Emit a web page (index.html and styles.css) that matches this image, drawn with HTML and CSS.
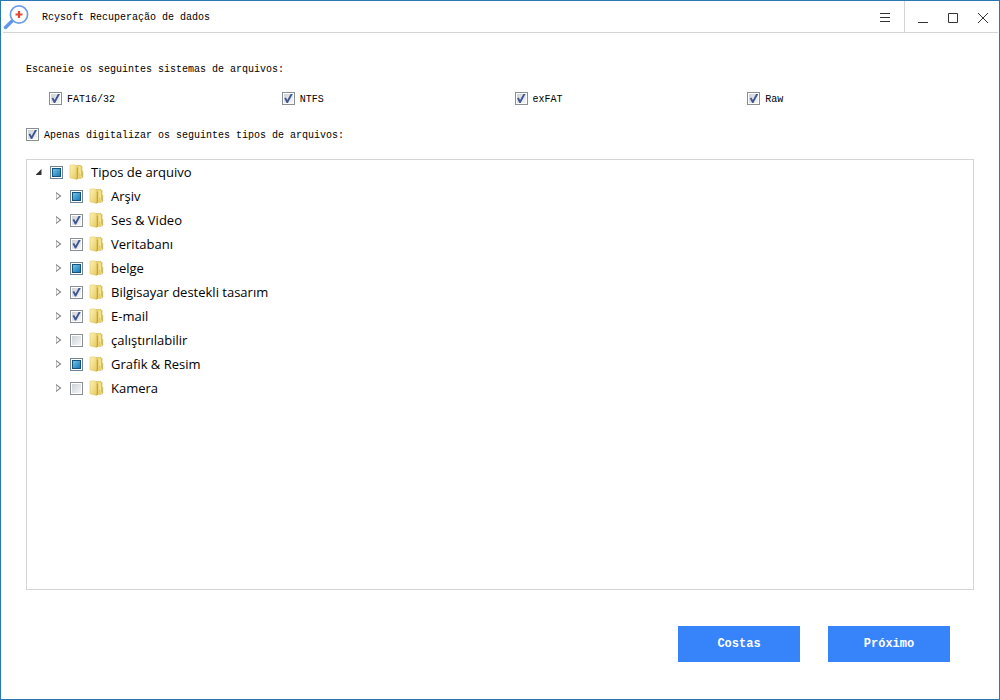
FILE: index.html
```
<!DOCTYPE html>
<html lang="pt">

<head>
    <meta charset="UTF-8">
    <meta name="viewport" content="width=device-width, initial-scale=1.0">
    <title>Rcysoft Recuperação de dados</title>
    <link rel="stylesheet" href="styles.css">
</head>

<body>
    <svg class="sprite" aria-hidden="true">
        <defs>
            <linearGradient id="folderBack" x1="0" y1="0" x2="1" y2="0">
                <stop offset="0" stop-color="#f6e68c" />
                <stop offset="1" stop-color="#d9b947" />
            </linearGradient>
            <linearGradient id="folderFront" x1="0" y1="0" x2="1" y2="1">
                <stop offset="0" stop-color="#fdf5b4" />
                <stop offset="1" stop-color="#e3c75c" />
            </linearGradient>
            <symbol id="folder" viewBox="0 0 16 16">
                <path d="M7 1.5h5l1 1v4l.8.8v6l-1.3 1H7z" fill="url(#folderBack)" stroke="#d2b552" stroke-width=".6" />
                <path d="M11 2.500v6.500l1.200.8v4" fill="none" stroke="#fff3b0" stroke-width="1" />
                <path d="M12.900 9v3.500" stroke="#9fb27c" stroke-width="1" />
                <path d="M1 1.200 5.500.8l2.500 2v12.700L1 13.800z" fill="url(#folderFront)" stroke="#dfc566" stroke-width=".6" />
                <path d="M8.300 3.500v11.500" stroke="#c09c35" stroke-width="1" />
            </symbol>
        </defs>
    </svg>

    <header class="titlebar">
        <svg class="logo" width="26" height="26" viewBox="0 0 26 26" aria-hidden="true">
            <path d="M2.500 23.500 9 17" stroke="#5f97ea" stroke-width="3.400" stroke-linecap="round" />
            <path d="M8.500 17.500l2.500-2.500" stroke="#5f97ea" stroke-width="1.600" />
            <circle cx="16" cy="10.500" r="8.600" fill="#fff" stroke="#6d9fea" stroke-width="1.700" />
            <path d="M16 7v7M12.500 10.500h7" stroke="#e2492f" stroke-width="2.200" />
        </svg>
        <h1>Rcysoft Recuperação de dados</h1>
        <button type="button" class="window-button menu-button" aria-label="Menu">
            <svg width="12" height="12" viewBox="0 0 12 12"><path d="M1 2.500h10M1 6.500h10M1 10.500h10" /></svg>
        </button>
        <div class="window-controls">
            <button type="button" class="window-button" aria-label="Minimizar">
                <svg width="12" height="12" viewBox="0 0 12 12"><path d="M1 11.500h10" /></svg>
            </button>
            <button type="button" class="window-button" aria-label="Maximizar">
                <svg width="12" height="12" viewBox="0 0 12 12"><path d="M1.500 2.500h9v9h-9z" /></svg>
            </button>
            <button type="button" class="window-button" aria-label="Fechar">
                <svg width="12" height="12" viewBox="0 0 12 12"><path d="M1 2l10 10M11 2L1 12" /></svg>
            </button>
        </div>
    </header>

    <main class="content">
        <fieldset class="systems">
            <legend>Escaneie os seguintes sistemas de arquivos:</legend>
            <div class="system-list">
                <label class="option"><input type="checkbox" checked>FAT16/32</label>
                <label class="option"><input type="checkbox" checked>NTFS</label>
                <label class="option"><input type="checkbox" checked>exFAT</label>
                <label class="option"><input type="checkbox" checked>Raw</label>
            </div>
        </fieldset>

        <label class="option"><input type="checkbox" checked>Apenas digitalizar os seguintes tipos de arquivos:</label>

        <div class="tree">
            <div class="tree-row">
                <button type="button" class="toggle open" aria-label="Recolher" aria-expanded="true"></button>
                <label class="node"><input type="checkbox" class="partial"><svg class="folder"><use href="#folder" /></svg>Tipos de arquivo</label>
            </div>
            <ul>
                <li class="tree-row">
                    <button type="button" class="toggle" aria-label="Expandir"></button>
                    <label class="node"><input type="checkbox" class="partial"><svg class="folder"><use href="#folder" /></svg>Arşiv</label>
                </li>
                <li class="tree-row">
                    <button type="button" class="toggle" aria-label="Expandir"></button>
                    <label class="node"><input type="checkbox" checked><svg class="folder"><use href="#folder" /></svg>Ses &amp; Video</label>
                </li>
                <li class="tree-row">
                    <button type="button" class="toggle" aria-label="Expandir"></button>
                    <label class="node"><input type="checkbox" checked><svg class="folder"><use href="#folder" /></svg>Veritabanı</label>
                </li>
                <li class="tree-row">
                    <button type="button" class="toggle" aria-label="Expandir"></button>
                    <label class="node"><input type="checkbox" class="partial"><svg class="folder"><use href="#folder" /></svg>belge</label>
                </li>
                <li class="tree-row">
                    <button type="button" class="toggle" aria-label="Expandir"></button>
                    <label class="node"><input type="checkbox" checked><svg class="folder"><use href="#folder" /></svg>Bilgisayar destekli tasarım</label>
                </li>
                <li class="tree-row">
                    <button type="button" class="toggle" aria-label="Expandir"></button>
                    <label class="node"><input type="checkbox" checked><svg class="folder"><use href="#folder" /></svg>E-mail</label>
                </li>
                <li class="tree-row">
                    <button type="button" class="toggle" aria-label="Expandir"></button>
                    <label class="node"><input type="checkbox"><svg class="folder"><use href="#folder" /></svg>çalıştırılabilir</label>
                </li>
                <li class="tree-row">
                    <button type="button" class="toggle" aria-label="Expandir"></button>
                    <label class="node"><input type="checkbox" class="partial"><svg class="folder"><use href="#folder" /></svg>Grafik &amp; Resim</label>
                </li>
                <li class="tree-row">
                    <button type="button" class="toggle" aria-label="Expandir"></button>
                    <label class="node"><input type="checkbox"><svg class="folder"><use href="#folder" /></svg>Kamera</label>
                </li>
            </ul>
        </div>
    </main>

    <footer class="actions">
        <button type="button" class="action">Costas</button>
        <button type="button" class="action">Próximo</button>
    </footer>

    <script>
        // The mixed state can only be set from script
        document.querySelectorAll('.partial').forEach((box) => {
            box.indeterminate = true;
        });

        // Fold and unfold the root node
        const root = document.querySelector('.toggle.open');
        const list = document.querySelector('.tree ul');
        root.addEventListener('click', () => {
            const open = root.classList.toggle('open');
            root.setAttribute('aria-expanded', open);
            list.hidden = !open;
        });
    </script>
</body>

</html>
```
FILE: styles.css
```
*,
*::before {
    box-sizing: border-box;
    margin: 0;
    padding: 0;
}

body {
    min-height: 100vh;
    display: flex;
    flex-direction: column;
    border: 1px solid #2878b4;
    background-color: #fff;
    color: #000;
    font-family: "Liberation Mono", monospace;
    font-size: 10px;
    line-height: 16px;
}

button {
    border: none;
    background: none;
    cursor: pointer;
}

.sprite {
    position: absolute;
    width: 0;
    height: 0;
}

/* Title bar */
.titlebar {
    display: flex;
    align-items: center;
    height: 32px;
    margin: 0 1px 0 2px;
    border-bottom: 1px solid #d5d5d5;
}

.logo {
    margin-right: 13px;
}

h1 {
    flex: 1;
    padding-top: 2px;
    font-size: 10px;
    font-weight: normal;
}

.window-button {
    display: flex;
    align-items: center;
    justify-content: center;
    width: 30px;
    height: 31px;
}

.window-button:hover {
    background-color: #eee;
}

.window-button svg {
    fill: none;
    stroke: #333;
    stroke-width: 1;
}

.menu-button {
    width: 38px;
}

.window-controls {
    display: flex;
    padding-left: 3px;
    border-left: 1px solid #d5d5d5;
}

/* Scan options */
.content {
    flex: 1;
    display: flex;
    flex-direction: column;
    padding: 29px 25px 0;
}

.systems {
    border: none;
    margin-bottom: 20px;
}

.system-list {
    display: grid;
    grid-template-columns: repeat(4, 1fr);
    gap: 8px;
    padding: 14px 2px 0 23px;
}

.option {
    display: flex;
    align-items: flex-start;
    gap: 5px;
}

input[type="checkbox"] {
    appearance: none;
    display: grid;
    place-items: center;
    width: 13px;
    height: 13px;
    border: 1px solid #8a8f94;
    background: linear-gradient(135deg, #cdd2da, #f6f6f6) content-box #f4f4f4;
    padding: 1px;
}

input[type="checkbox"]:checked::before {
    content: "";
    width: 9px;
    height: 9px;
    background-color: #41568f;
    clip-path: polygon(6% 48%, 24% 40%, 40% 66%, 76% 0, 100% 0, 46% 100%, 32% 100%);
}

input[type="checkbox"]:indeterminate {
    border-color: #6f8597;
    background: #fff;
}

input[type="checkbox"]:indeterminate::before {
    content: "";
    width: 9px;
    height: 9px;
    border: 1px solid #17527d;
    background: linear-gradient(135deg, #6cc4ea, #1c78b4);
}

/* File type tree */
.tree {
    flex: 1;
    margin-top: 15px;
    padding-left: 3px;
    border: 1px solid #d5d5d5;
    font-family: "Open Sans", sans-serif;
    font-size: 13px;
}

.tree ul {
    list-style: none;
    padding-left: 20px;
}

.tree-row,
.node {
    display: flex;
    align-items: center;
    height: 24px;
}

.folder {
    width: 16px;
    height: 16px;
    margin: 0 6px;
}

.toggle {
    width: 17px;
    height: 16px;
    margin-right: 3px;
    display: grid;
    place-items: center;
}

.toggle::before {
    content: "";
    width: 6px;
    height: 9px;
    background-color: #8a8a8a;
    clip-path: polygon(0 0, 100% 50%, 0 100%, 0 0, 1px 2px, 1px 7px, 4px 50%, 1px 2px);
}

.toggle.open::before {
    width: 6px;
    height: 6px;
    background-color: #333;
    clip-path: polygon(100% 0, 100% 100%, 0 100%);
}

/* Bottom buttons */
.actions {
    display: flex;
    justify-content: flex-end;
    gap: 28px;
    padding: 36px 49px 37px;
}

.action {
    width: 122px;
    height: 36px;
    background-color: #3783fa;
    color: #fff;
    font-family: "Liberation Mono", monospace;
    font-size: 12px;
    font-weight: bold;
}

.action:hover {
    background-color: #2a74e8;
}
```
